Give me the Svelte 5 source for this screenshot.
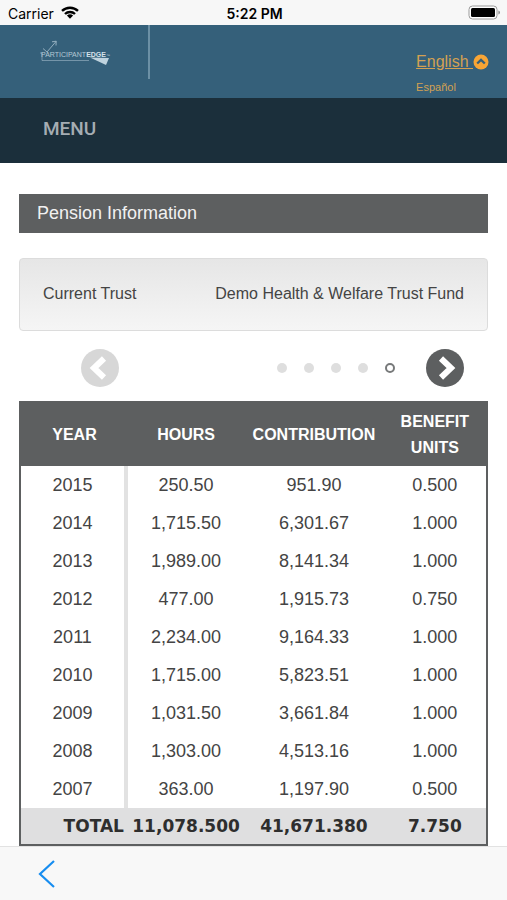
<script>
  const columns = ['Year', 'Hours', 'Contribution', 'Benefit Units'];
  const rows = [
    ['2015', '250.50', '951.90', '0.500'],
    ['2014', '1,715.50', '6,301.67', '1.000'],
    ['2013', '1,989.00', '8,141.34', '1.000'],
    ['2012', '477.00', '1,915.73', '0.750'],
    ['2011', '2,234.00', '9,164.33', '1.000'],
    ['2010', '1,715.00', '5,823.51', '1.000'],
    ['2009', '1,031.50', '3,661.84', '1.000'],
    ['2008', '1,303.00', '4,513.16', '1.000'],
    ['2007', '363.00', '1,197.90', '0.500']
  ];
  const totals = ['11,078.500', '41,671.380', '7.750'];
  const pages = 5;
  let current = $state(4);
</script>

<div class="screen">
  <div class="status">
    <div class="carrier">
      <span>Carrier</span>
      <svg width="18" height="13" viewBox="0 0 18 13" aria-hidden="true">
        <g fill="none" stroke="#000" stroke-width="2.4">
          <path d="M1 4.9a11.6 11.6 0 0 1 16 0" />
          <path d="M4 8a7.2 7.2 0 0 1 10 0" />
        </g>
        <path d="M9 12.7 5.9 9.6a4.5 4.5 0 0 1 6.2 0z" />
      </svg>
    </div>
    <div class="time">5:22 PM</div>
    <svg class="battery" width="33" height="15" viewBox="0 0 33 15" aria-hidden="true">
      <rect x="1" y="1" width="28" height="13" rx="3.5" fill="#fff" stroke="#9a9a9a" />
      <rect x="3" y="3" width="24" height="9" rx="1.5" />
      <path d="M30.5 5.5c1.8.6 1.8 3.4 0 4z" fill="#777" />
    </svg>
  </div>

  <header class="banner">
    <a class="logo" href="#home" aria-label="ParticipantEdge">
      <svg width="76" height="27" viewBox="0 0 76 27">
        <g fill="none" stroke="#a9c1cf" stroke-width="0.8">
          <path d="M4 8.5 8 12 17 1.5M13 1.8 17.2 1.2 17 5.5" />
          <path d="M1 13H3V20.5H50" opacity="0.7" />
        </g>
        <path d="M51 17.5 70 18 67 25Z" fill="#bfd3de" />
        <text x="2" y="17" fill="#b4c9d5" font-size="7">PARTICIPANT<tspan font-weight="700" fill="#d5e2ea">EDGE</tspan><tspan font-size="4">™</tspan></text>
      </svg>
    </a>
    <nav class="languages" aria-label="Language">
      <a class="selected" href="#english"><span>English&nbsp;</span><svg width="16" height="16" viewBox="0 0 16 16" aria-hidden="true">
          <circle cx="8" cy="8" r="7.5" fill="#f8a535" />
          <path d="M4.2 9.5 8 5.9 11.8 9.5" fill="none" stroke="#35607a" stroke-width="2.3" />
        </svg></a>
      <a href="#espanol">Español</a>
    </nav>
  </header>

  <div class="menubar"><button type="button">MENU</button></div>

  <main>
    <h1>Pension Information</h1>

    <dl class="trust">
      <dt>Current Trust</dt>
      <dd>Demo Health &amp; Welfare Trust Fund</dd>
    </dl>

    <div class="pager">
      <button class="arrow muted" type="button" aria-label="Previous" onclick={() => (current = Math.max(0, current - 1))}>
        <svg width="38" height="38" viewBox="0 0 38 38"><path d="M23 9.5 13 19 23 28.5" /></svg>
      </button>
      <div class="right">
        <div class="dots">
          {#each { length: pages } as _, i}
            <button type="button" class="dot" class:active={i === current} aria-label={`Page ${i + 1}`} onclick={() => (current = i)}></button>
          {/each}
        </div>
        <button class="arrow" type="button" aria-label="Next" onclick={() => (current = Math.min(pages - 1, current + 1))}>
          <svg width="38" height="38" viewBox="0 0 38 38"><path d="M15 9.5 25 19 15 28.5" /></svg>
        </button>
      </div>
    </div>

    <table>
      <thead>
        <tr>
          {#each columns as column}<th scope="col">{column}</th>{/each}
        </tr>
      </thead>
      <tbody>
        {#each rows as row}
          <tr>
            {#each row as cell}<td>{cell}</td>{/each}
          </tr>
        {/each}
      </tbody>
      <tfoot>
        <tr>
          <th scope="row">TOTAL</th>
          {#each totals as total}<td>{total}</td>{/each}
        </tr>
      </tfoot>
    </table>
  </main>

  <footer>
    <button type="button" aria-label="Back">
      <svg width="18" height="28" viewBox="0 0 18 28"><path d="M16 1 2 14 16 27" fill="none" stroke="#178df0" stroke-width="2.2" /></svg>
    </button>
  </footer>
</div>

<style>
  :global(body) {
    margin: 0;
    background: #fff;
  }
  .screen {
    display: flex;
    flex-direction: column;
    min-height: 100vh;
    font-family: 'Liberation Sans', Arial, sans-serif;
    color: #444;
  }
  button {
    padding: 0;
    border: 0;
    background: none;
    font: inherit;
    cursor: pointer;
  }
  svg {
    display: block;
  }
  .status {
    display: grid;
    grid-template-columns: 1fr auto 1fr;
    align-items: center;
    height: 25px;
    padding: 0 6px 0 8px;
    box-sizing: border-box;
    background: #f7f7f7;
    color: #000;
    font: 14px/23px Inter, sans-serif;
  }
  .carrier {
    display: flex;
    align-items: center;
    gap: 7px;
  }
  .carrier span,
  .time {
    padding-top: 2px;
  }
  .time {
    font-weight: 600;
  }
  .battery {
    justify-self: end;
  }
  .banner {
    display: flex;
    justify-content: space-between;
    height: 73px;
    background: #35607a;
  }
  .logo {
    height: 39px;
    padding: 15px 33px 0 39px;
    border-right: 2px solid #6c90a5;
  }
  .languages {
    display: flex;
    flex-direction: column;
    padding: 27px 18px 0 0;
  }
  .languages a {
    color: #d3a052;
    font-size: 11px;
    line-height: 15px;
    text-decoration: none;
  }
  .languages a.selected {
    display: flex;
    align-items: center;
    margin-bottom: 8px;
    font-size: 16px;
    line-height: 20px;
  }
  .selected span {
    text-decoration: underline;
  }
  .menubar {
    height: 65px;
    padding: 0 43px;
    box-sizing: border-box;
    background: #1b2f3b;
  }
  .menubar button {
    height: 60px;
    color: #a5adb3;
    font: 500 19px Roboto, sans-serif;
  }
  main {
    padding: 31px 19px 0;
  }
  h1 {
    margin: 0 0 25px;
    padding-left: 18px;
    background: #5d5f60;
    color: #f1f1f1;
    font-size: 18px;
    font-weight: 400;
    line-height: 39px;
  }
  .trust {
    display: flex;
    justify-content: space-between;
    margin: 0;
    padding: 0 23px 2px;
    border: 1px solid #dcdcdc;
    border-radius: 4px;
    background: linear-gradient(#e6e6e6, #f5f5f5);
    font-size: 16px;
    line-height: 69px;
  }
  .trust dd {
    margin: 0;
  }
  .pager {
    display: flex;
    align-items: center;
    justify-content: space-between;
    height: 70px;
    padding: 4px 24px 0 62px;
    box-sizing: border-box;
  }
  .right {
    display: flex;
    align-items: center;
    gap: 31px;
  }
  .dots {
    display: flex;
    gap: 17px;
  }
  .dot {
    width: 10px;
    height: 10px;
    border-radius: 50%;
    box-sizing: border-box;
    background: #dedede;
  }
  .dot.active {
    border: 2px solid #77797a;
    background: #fff;
  }
  .arrow {
    border-radius: 50%;
    background: #5d5f60;
  }
  .arrow.muted {
    background: #d7d7d7;
  }
  .arrow path {
    fill: none;
    stroke: #fff;
    stroke-width: 6;
  }
  table {
    width: 100%;
    table-layout: fixed;
    border-collapse: separate;
    border-spacing: 0;
    border: 2px solid #5d5f60;
    box-sizing: border-box;
    text-align: center;
    font-size: 18px;
  }
  th,
  td {
    padding: 0;
  }
  thead th {
    height: 63px;
    background: #5d5f60;
    color: #fff;
    font-size: 16px;
    line-height: 26px;
    text-transform: uppercase;
  }
  th:nth-child(1) {
    width: 23%;
  }
  th:nth-child(2) {
    width: 25%;
  }
  th:nth-child(3) {
    width: 30%;
  }
  tbody td {
    height: 38px;
  }
  tbody td:first-child {
    border-right: 4px solid #e2e2e2;
  }
  tfoot th,
  tfoot td {
    height: 36px;
    background: #dfdfe0;
    color: #2e2e2e;
    font: 700 17px 'DejaVu Sans', sans-serif;
  }
  tfoot th {
    padding-right: 4px;
    text-align: right;
  }
  footer {
    flex: 1;
    display: flex;
    align-items: center;
    min-height: 54px;
    padding: 0 38px;
    box-sizing: border-box;
    background: #f8f8f8;
    border-top: 1px solid #e2e2e2;
  }
</style>
